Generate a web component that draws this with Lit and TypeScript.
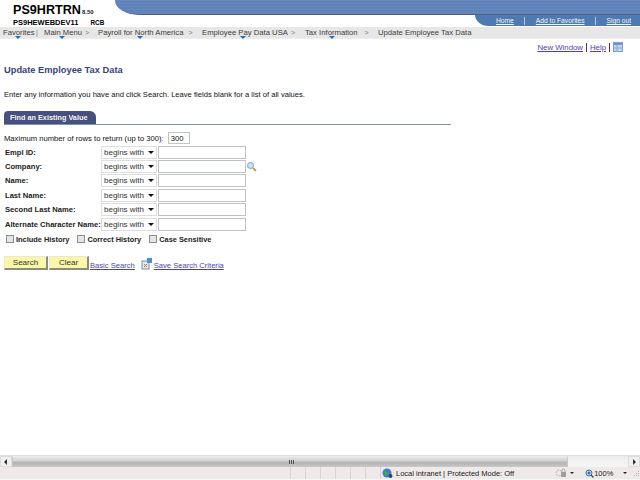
import { LitElement, html, css } from "lit";
import { customElement } from "lit/decorators.js";

const crumbs = [
  { t: "Favorites", w: 30, gap: 11, sep: "|" },
  { t: "Main Menu", w: 35, gap: 19, sep: ">" },
  { t: "Payroll for North America", w: 84, gap: 20, sep: ">" },
  { t: "Employee Pay Data USA", w: 82, gap: 21, sep: ">" },
  { t: "Tax Information", w: 53, gap: 20, sep: ">" },
  { t: "Update Employee Tax Data", w: 94, gap: 0, sep: "", noArrow: true },
];
const fields = ["Empl ID:", "Company:", "Name:", "Last Name:", "Second Last Name:", "Alternate Character Name:"];
const dividers = [1, 2, 3, 4, 5, 6, 7];

@customElement("app-root")
export class AppRoot extends LitElement {
  static styles = css`
    :host { display: block; width: 640px; height: 480px; overflow: hidden; background: #fff; font-family: "Liberation Sans", Arial, sans-serif; color: #111; font-size: 8px; }
    .page { display: flex; flex-direction: column; height: 480px; }
    a { color: #4b3fc0; text-decoration: underline; }
    .top { display: flex; height: 27px; }
    .brand { width: 115px; flex: none; padding: 4px 0 0 13px; box-sizing: border-box; color: #000; font-weight: bold; }
    .sys { font-size: 12.6px; line-height: 13px; display: flex; align-items: baseline; }
    .sys small { font-size: 6px; margin-left: 1px; color: #222; }
    .srv { font-size: 7.5px; line-height: 8px; display: flex; gap: 12px; }
    .srv span + span { font-size: 6.4px; }
    .hdr { flex: 1; display: flex; flex-direction: column; }
    .band { height: 15px; box-sizing: border-box; border-radius: 0 0 0 24px / 0 0 0 15px; background: repeating-linear-gradient(#6688bf 0 1px, #5f82b9 1px 3px); border-bottom: 1px solid #555f80; }
    .tabs { align-self: flex-end; width: 165px; height: 11px; background: #4f79b1; border-radius: 0 0 0 14px / 0 0 0 11px; display: flex; align-items: center; font-size: 6.7px; box-sizing: border-box; padding-left: 21px; }
    .tabs a { color: #f2f5fb; line-height: 11px; white-space: nowrap; }
    .tabs i { width: 1px; height: 8px; background: #b9cbe3; margin: 0 10.5px; }
    .crumb { height: 11px; background: #e7e7e7; display: flex; align-items: center; padding-left: 3px; color: #3c3c3c; font-size: 7.7px; white-space: nowrap; border-bottom: 1px solid #eee; box-sizing: content-box; }
    .ci { position: relative; display: block; line-height: 11px; }
    .ci.arr::after { content: ""; position: absolute; left: calc(50% - 3px); top: 9px; border: 3px solid transparent; border-top-color: #2f6bb0; border-bottom: 0; }
    .sp { text-align: center; color: #777; font-size: 7px; display: block; line-height: 11px; padding-right: 3px; box-sizing: border-box; }
    .util { display: flex; justify-content: flex-end; align-items: center; height: 14px; margin-top: 1px; padding-right: 17px; font-size: 7.8px; gap: 3px; }
    .util b { width: 1px; height: 9px; background: #5a2a6e; }
    .util svg { margin-left: 0; }
    h1 { margin: 10px 0 0 4px; font-size: 9.3px; line-height: 12px; color: #3a3f7d; font-weight: bold; }
    .intro { margin: 14px 0 0 4px; font-size: 7.6px; line-height: 10px; color: #111; white-space: nowrap; }
    .tabline { margin: 11px 0 0 4px; width: 447px; height: 13px; border-bottom: 1px solid #7d95ab; display: flex; }
    .tab { width: 92px; height: 13px; box-sizing: border-box; padding-left: 6px; background: #47507f; border-radius: 4px 6px 0 0; color: #f4f4f4; font-weight: bold; font-size: 7.3px; line-height: 13px; }
    .max { margin: 7px 0 0 4px; display: flex; align-items: center; gap: 4px; font-size: 7.65px; height: 12px; white-space: nowrap; }
    input.num { width: 22px; }
    .box { box-sizing: border-box; border: 1px solid #bfc4c4; height: 12px; padding: 0 0 0 2px; font: inherit; background: #fff; color: #111; border-radius: 0; outline: none; display: block; }
    .grid { margin: 1px 0 0 5px; display: grid; grid-template-columns: 96px 57px 88px 14px; grid-auto-rows: 14.4px; align-items: center; width: max-content; }
    .grid label { font-weight: bold; font-size: 7.6px; white-space: nowrap; color: #222; }
    .sel { box-sizing: border-box; width: 56px; height: 13px; border: 1px solid #ddd; display: flex; align-items: center; padding-left: 2px; font-size: 8px; color: #333; position: relative; white-space: nowrap; }
    .sel::after { content: ""; position: absolute; right: 2px; top: 4px; border: 3px solid transparent; border-top-color: #111; border-bottom: 0; }
    .grid input { width: 88px; height: 13px; }
    .grid svg { display: block; }
    .checks { margin: 1px 0 0 6px; display: flex; height: 14px; align-items: center; font-weight: bold; font-size: 7.4px; color: #222; white-space: nowrap; }
    .checks span { display: flex; align-items: center; gap: 2px; margin-right: 8px; }
    .checks i { display: block; width: 6px; height: 6px; background: #e5e5e5; border: 1px solid #8d8d8d; }
    .acts { margin: 10px 0 0 4px; display: flex; align-items: flex-end; height: 14px; }
    .btn { box-sizing: border-box; height: 14px; background: #faf8a8; border: 1px solid #e8e8d8; border-right: 2px solid #8c8c7c; border-bottom: 2px solid #8c8c7c; text-align: center; font-size: 8px; line-height: 11px; color: #333; padding: 0; }
    .s { width: 44px; margin-right: 1px; }
    .c { width: 40px; margin-right: 1px; }
    .acts a { font-size: 7.6px; line-height: 8px; white-space: nowrap; }
    .acts svg { margin: 0 2px 0 6px; }
    .spacer { flex: 1; }
    .scroll { height: 12px; display: flex; background: #eee; border-top: 1px solid #dfdfdf; box-sizing: border-box; }
    .arrow { width: 12px; background: #f0f0f0; border: 1px solid #ddd; box-sizing: border-box; position: relative; }
    .arrow::after { content: ""; position: absolute; top: 2px; left: 3px; border: 3px solid transparent; border-right-color: #333; border-left: 0; }
    .arrow.r::after { left: 4px; border-right: 0; border-left: 3px solid #333; }
    .thumb { width: 556px; background: linear-gradient(#e6e6e6, #d2d2d2 45%, #b4b4b4 55%, #c2c2c2); position: relative; box-sizing: border-box; border: 1px solid #c8c8c8; border-top-color: #eee; }
    .thumb::after { content: ""; position: absolute; left: 276px; top: 3px; width: 5px; height: 4px; background: repeating-linear-gradient(90deg, #555 0 1px, transparent 1px 2px); }
    .track { flex: 1; background: linear-gradient(#ececec, #f6f6f6); }
    .status { height: 13px; background: #f0e9e9; display: flex; align-items: center; color: #222; font-size: 7.5px; white-space: nowrap; padding-left: 290px; box-sizing: border-box; border-bottom: 1px solid #f6f6f6; }
    .status .d { width: 15px; height: 12px; border-left: 1px solid #dad3d3; box-sizing: border-box; flex: none; }
    .status .d:nth-child(7) { width: 2px; }
    .status svg { flex: none; display: block; }
    .dn { width: 0; height: 0; border: 2.5px solid transparent; border-top-color: #222; border-bottom: 0; flex: none; }
    .globe { margin-left: 0; }
    .loc { margin-left: 3px; }
    .lock { margin-left: 41px; }
    .dn.a { margin-left: 3px; }
    .zoom { margin-left: 11px; }
    .dn.b { margin-left: 10px; }
    .grip { margin-left: 6px; }
  `;

  mag() {
    return html`<svg width="11" height="11" viewBox="0 0 11 11"><circle cx="4.5" cy="4.5" r="3" fill="#cfe2f2" stroke="#7f9db8"/><path d="M7 7l3 3" stroke="#b98a3a" stroke-width="1.6"/></svg>`;
  }

  render() {
    return html`<div class="page">
      <div class="top">
        <div class="brand">
          <div class="sys">PS9HRTRN<small>8.50</small></div>
          <div class="srv"><span>PS9HEWEBDEV11</span><span>RCB</span></div>
        </div>
        <div class="hdr">
          <div class="band"></div>
          <div class="tabs"><a>Home</a><i></i><a>Add to Favorites</a><i></i><a>Sign out</a></div>
        </div>
      </div>
      <div class="crumb">
        ${crumbs.map(
          (c) => html`<span class="ci ${c.noArrow ? "" : "arr"}" style="width:${c.w}px">${c.t}</span>${c.gap
            ? html`<span class="sp" style="width:${c.gap}px">${c.sep}</span>`
            : ""}`
        )}
      </div>
      <div class="util"><a>New Window</a><b></b><a>Help</a><b></b>
        <svg width="10" height="10" viewBox="0 0 10 10"><rect x=".5" y=".5" width="9" height="9" fill="#c4d6ee" stroke="#7f9fcc"/><rect x="1" y="1" width="8" height="2" fill="#6f95cc"/><path d="M4 3v6M1 6h8" stroke="#8aa8d4"/></svg>
      </div>
      <h1>Update Employee Tax Data</h1>
      <div class="intro">Enter any information you have and click Search. Leave fields blank for a list of all values.</div>
      <div class="tabline"><div class="tab">Find an Existing Value</div></div>
      <div class="max">Maximum number of rows to return (up to 300): <input class="box num" value="300" /></div>
      <div class="grid">
        ${fields.map(
          (f) => html`<label>${f}</label><div class="sel">begins with</div><input class="box" />${f === "Company:" ? this.mag() : html`<span></span>`}`
        )}
      </div>
      <div class="checks">
        <span><i></i>Include History</span><span><i></i>Correct History</span><span><i></i>Case Sensitive</span>
      </div>
      <div class="acts">
        <button class="btn s">Search</button><button class="btn c">Clear</button>
        <a>Basic Search</a>
        <svg width="11" height="12" viewBox="0 0 11 12"><rect x="1" y="3" width="7" height="8" fill="#dfe9f3" stroke="#7d8fa5"/><rect x="6" y="0" width="5" height="5" fill="#4f8fd0"/><path d="M3 6l3 3M6 6l-3 3" stroke="#b07a50"/></svg>
        <a>Save Search Criteria</a>
      </div>
      <div class="spacer"></div>
      <div class="scroll"><div class="arrow"></div><div class="thumb"></div><div class="track"></div><div class="arrow r"></div></div>
      <div class="status">
        ${dividers.map(() => html`<div class="d"></div>`)}
        <svg class="globe" width="11" height="11" viewBox="0 0 11 11"><circle cx="5" cy="5" r="4.5" fill="#3f7fc8"/><path d="M2 3c2-1 3 1 4 2s-1 3-2 3-1-3-2-5z" fill="#46a84a"/><circle cx="8.5" cy="8" r="2" fill="#26476e"/></svg>
        <span class="loc">Local intranet | Protected Mode: Off</span>
        <svg class="lock" width="12" height="11" viewBox="0 0 12 11"><circle cx="4" cy="5" r="3" fill="none" stroke="#b5b5b5" stroke-dasharray="2 1"/><rect x="6" y="4" width="5" height="5" fill="#9e9e9e"/><path d="M7 4V2.5a1.5 1.5 0 0 1 3 0V4" fill="none" stroke="#a5a5a5"/></svg>
        <div class="dn a"></div>
        <svg class="zoom" width="9" height="9" viewBox="0 0 9 9"><circle cx="4" cy="4" r="3" fill="#c3d9ef" stroke="#3f72b0"/><path d="M2.5 4h3M4 2.5v3" stroke="#1c4f92"/><path d="M6 6l2.5 2.5" stroke="#444" stroke-width="1.3"/></svg>
        <span>100%</span>
        <div class="dn b"></div>
        <svg class="grip" width="7" height="7" viewBox="0 0 7 7"><path d="M5 1h1v1H5zM3 3h1v1H3zM5 3h1v1H5zM1 5h1v1H1zM3 5h1v1H3zM5 5h1v1H5z" fill="#b9b3b3"/></svg>
      </div>
    </div>`;
  }
}
